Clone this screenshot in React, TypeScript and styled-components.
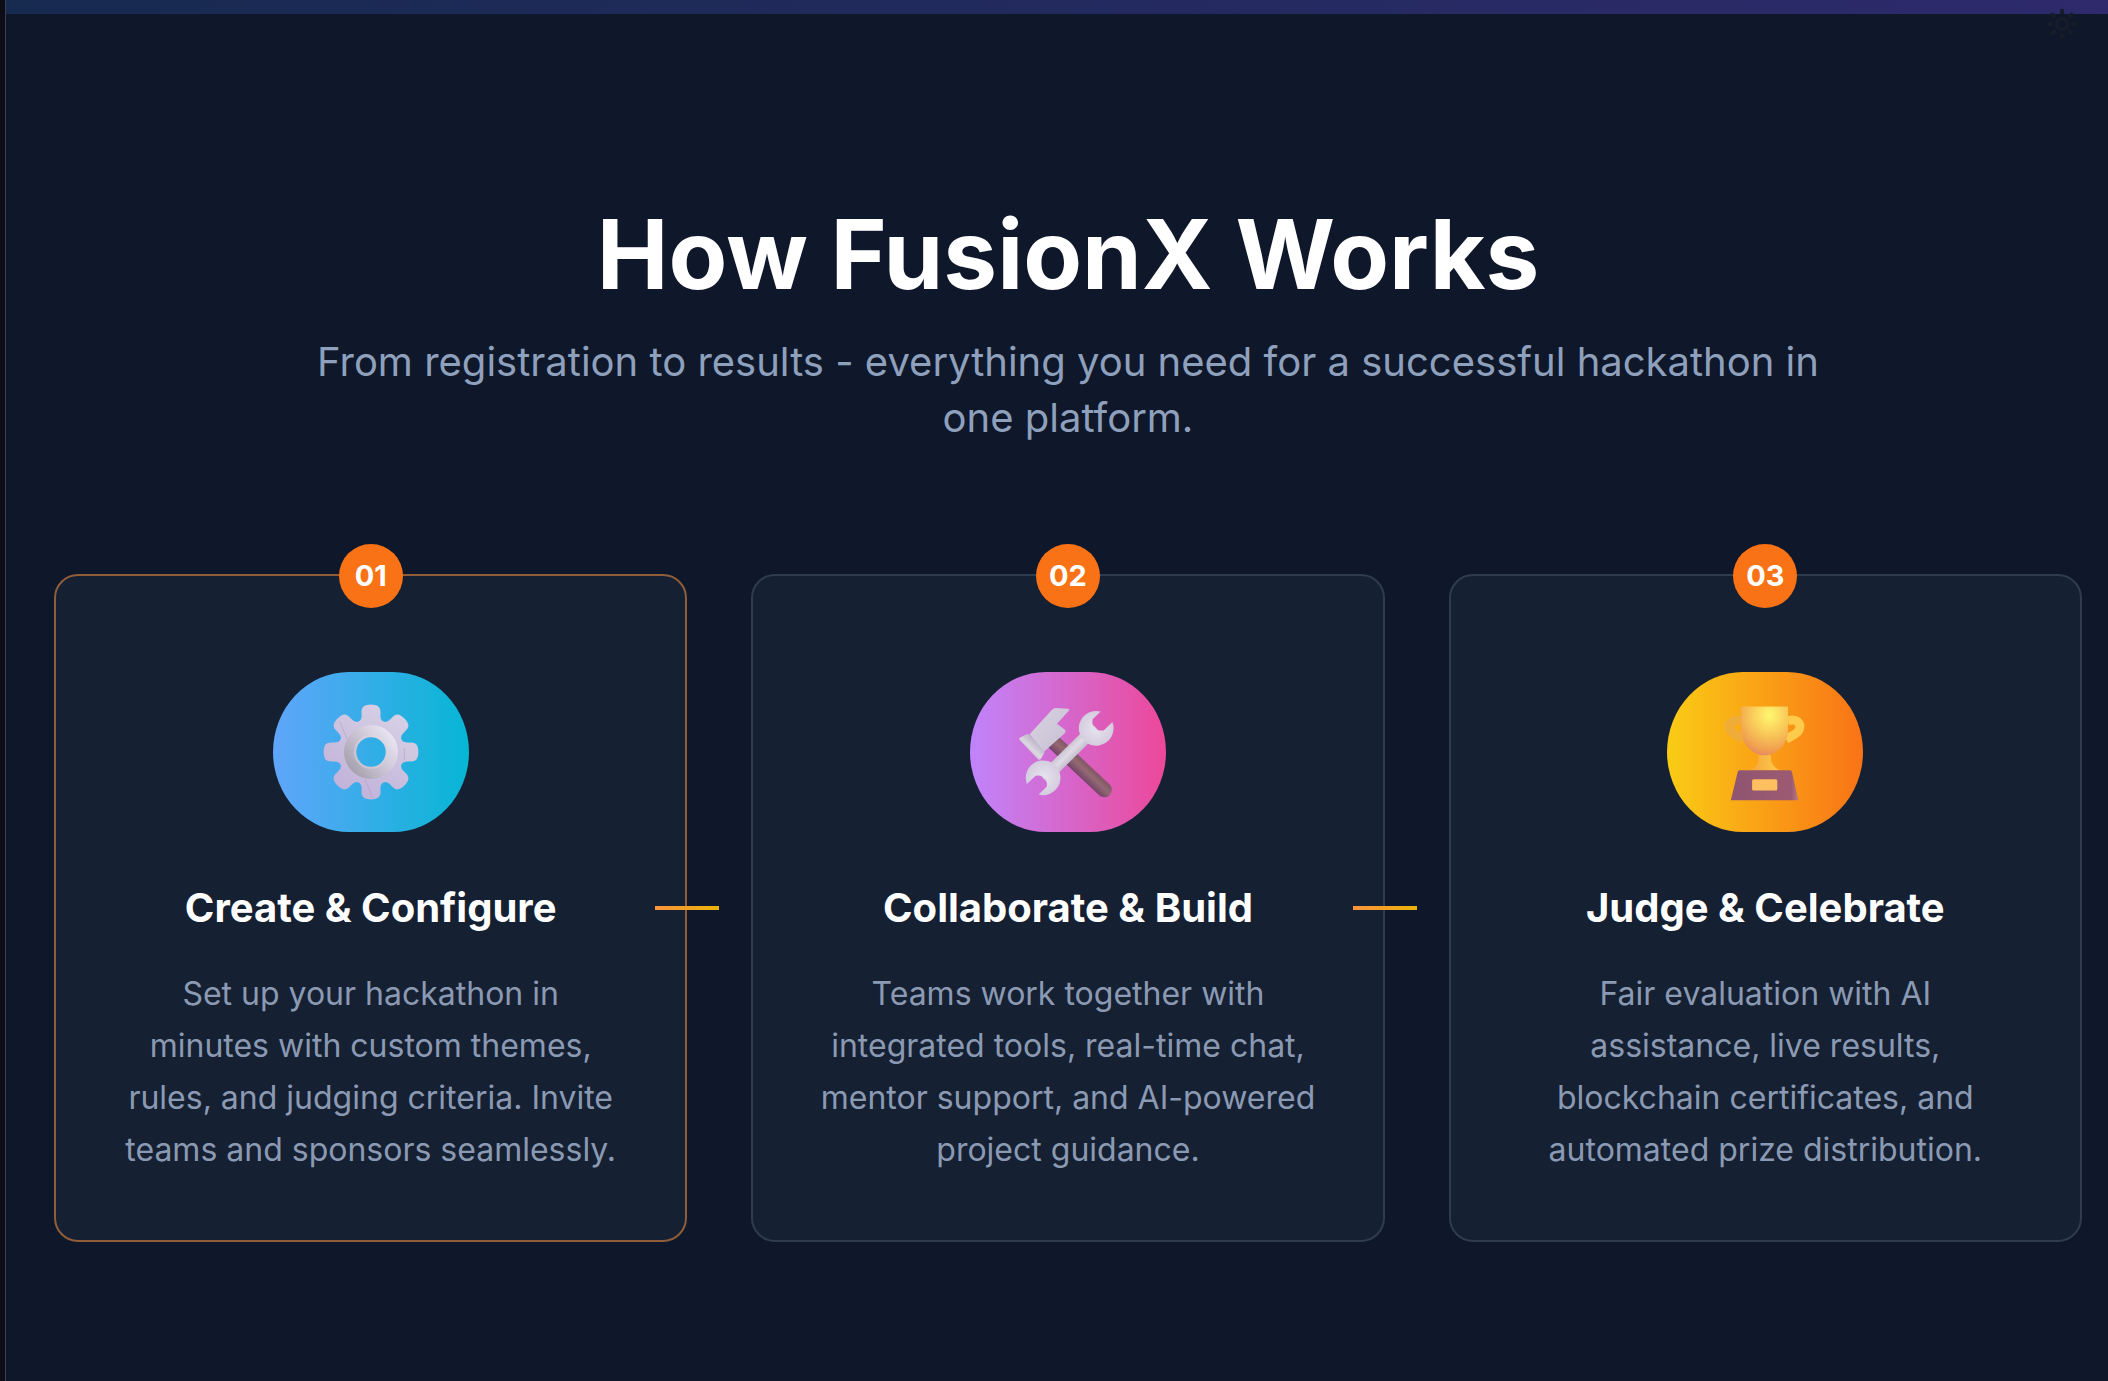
import React from "react";
import styled, { createGlobalStyle } from "styled-components";
import { Sun } from "lucide-react";

const GlobalStyle = createGlobalStyle`
  html, body {
    margin: 0;
    padding: 0;
    background: #0f172a;
  }
  * {
    box-sizing: border-box;
  }
`;

// polar point around the gear centre, 0deg pointing up
const pt = (deg: number, r: number) => {
  const a = (deg * Math.PI) / 180;
  return `${(16 + r * Math.sin(a)).toFixed(2)} ${(16 - r * Math.cos(a)).toFixed(2)}`;
};

const gearPath = () => {
  let d = `M${pt(-22.5, 11)}`;
  for (let i = 0; i < 8; i++) {
    const t = i * 45;
    d += ` Q${pt(t - 16, 11)} ${pt(t - 14, 13)}`;
    d += ` C${pt(t - 12.5, 15.8)} ${pt(t - 7, 15.8)} ${pt(t, 15.8)}`;
    d += ` C${pt(t + 7, 15.8)} ${pt(t + 12.5, 15.8)} ${pt(t + 14, 13)}`;
    d += ` Q${pt(t + 16, 11)} ${pt(t + 22.5, 11)}`;
  }
  return d + " Z";
};

function GearIcon() {
  return (
    <EmojiSvg viewBox="0 0 32 32">
      <defs>
        <linearGradient id="gearBody" x1="0.8" y1="0" x2="0.2" y2="1">
          <stop offset="0" stopColor="#d8d2e6" />
          <stop offset="1" stopColor="#bfb0d8" />
        </linearGradient>
        <linearGradient id="gearRing" x1="0.85" y1="0.15" x2="0.1" y2="0.75">
          <stop offset="0" stopColor="#e8e4f0" />
          <stop offset="0.55" stopColor="#c8c1d2" />
          <stop offset="1" stopColor="#a8a3b0" />
        </linearGradient>
        <linearGradient id="gearLip" x1="1" y1="0" x2="0" y2="1">
          <stop offset="0" stopColor="#e0dbe8" />
          <stop offset="1" stopColor="#c4bdcc" />
        </linearGradient>
        <mask id="gearHole">
          <rect width="32" height="32" fill="#fff" />
          <circle cx="16" cy="16" r="4.9" fill="#000" />
        </mask>
      </defs>
      <g mask="url(#gearHole)">
        <path d={gearPath()} fill="url(#gearBody)" />
        <path d="M5.6 5.9 L8.2 12 M27.1 14.7 V18.6 M14 25.2 L16.6 31.2" stroke="#a99cbd" strokeWidth="0.18" fill="none" />
        <circle cx="16" cy="16" r="9" fill="url(#gearRing)" />
        <circle cx="16" cy="16" r="5.7" fill="url(#gearLip)" />
      </g>
    </EmojiSvg>
  );
}

function ToolsIcon() {
  const jaw = "M30.8 6 A5.8 5.8 0 1 1 26.9 2.5 L24.2 5.1 Q23.6 9.4 27.9 8.8 Z";
  return (
    <EmojiSvg viewBox="0 0 32 32">
      <defs>
        <linearGradient id="handle" gradientUnits="userSpaceOnUse" x1="22.6" y1="19.2" x2="18.8" y2="23.2">
          <stop offset="0" stopColor="#7c5064" />
          <stop offset="0.5" stopColor="#946a72" />
          <stop offset="1" stopColor="#74446a" />
        </linearGradient>
        <linearGradient id="hammerHead" x1="0" y1="0" x2="1" y2="1">
          <stop offset="0" stopColor="#d8d3e0" />
          <stop offset="1" stopColor="#c6bfd4" />
        </linearGradient>
        <linearGradient id="hammerCap" gradientUnits="userSpaceOnUse" x1="1.8" y1="16.4" x2="5" y2="13">
          <stop offset="0" stopColor="#b9b4c2" />
          <stop offset="0.55" stopColor="#dcd7e2" />
          <stop offset="1" stopColor="#c2bccc" />
        </linearGradient>
        <linearGradient id="shaft" gradientUnits="userSpaceOnUse" x1="14.9" y1="14.9" x2="17.9" y2="17.9">
          <stop offset="0" stopColor="#cac5d3" />
          <stop offset="0.5" stopColor="#e0dbe6" />
          <stop offset="1" stopColor="#c4becf" />
        </linearGradient>
        <radialGradient id="wrenchHead" cx="0.5" cy="0.5" r="0.6">
          <stop offset="0" stopColor="#e8e4ee" />
          <stop offset="1" stopColor="#cfc8dc" />
        </radialGradient>
      </defs>
      <path d="M11.2 12.7 L28.1 28.6" stroke="url(#handle)" strokeWidth="5" strokeLinecap="round" fill="none" />
      <path d="M3.2 10.1 L10.6 2 Q11.2 1.3 12 1.3 L16 1.6 Q16.7 1.8 16.2 2.3 L12.3 6.6 L15 8.6 Q15.4 9.2 15 9.7 L7.9 16 Z" fill="url(#hammerHead)" />
      <path d="M-0.2 11.9 Q-0.4 11.4 0.2 11.1 L2.2 10.1 Q2.7 9.9 3.1 10.3 L8 15.6 Q8.3 16.1 8 16.6 L6.9 18.3 Q6.5 18.8 6 18.4 Z" fill="url(#hammerCap)" />
      <path d="M25.2 7.8 L7.9 24.9" stroke="url(#shaft)" strokeWidth="4.2" fill="none" />
      <path d={jaw} fill="url(#wrenchHead)" />
      <path d={jaw} fill="url(#wrenchHead)" transform="rotate(180 16.55 16.35)" />
    </EmojiSvg>
  );
}

function TrophyIcon() {
  return (
    <EmojiSvg viewBox="0 0 32 32">
      <defs>
        <radialGradient id="cup" cx="0.6" cy="0.18" r="1">
          <stop offset="0" stopColor="#fff870" />
          <stop offset="0.4" stopColor="#f9c858" />
          <stop offset="0.72" stopColor="#f09e50" />
          <stop offset="1" stopColor="#d66c80" />
        </radialGradient>
        <linearGradient id="stem" x1="0" y1="0" x2="1" y2="0">
          <stop offset="0" stopColor="#f2a63a" />
          <stop offset="1" stopColor="#ffc94d" />
        </linearGradient>
        <linearGradient id="plinth" x1="0" y1="0" x2="1" y2="0">
          <stop offset="0" stopColor="#8f5470" />
          <stop offset="0.9" stopColor="#9d5b72" />
          <stop offset="1" stopColor="#b87c80" />
        </linearGradient>
      </defs>
      <path d="M8.3 5.6 C5.3 4.6 3.6 6.4 4.4 8.6 C4.9 9.9 6.8 10.6 8.8 11.7" stroke="#efac38" strokeWidth="3" fill="none" />
      <path d="M23.5 5.6 C26.5 4.6 28.2 6.4 27.4 8.6 C26.9 9.9 25 10.6 23 11.7" stroke="#ffcb4c" strokeWidth="3" fill="none" />
      <path d="M13.9 16.8 H17.9 C17.9 19.5 18.5 20.8 20.9 22.2 H11.1 C13.5 20.8 13.9 19.5 13.9 16.8 Z" fill="url(#stem)" />
      <path d="M8.1 1.2 Q8.1 0.8 8.5 0.8 H23.3 Q23.7 0.8 23.7 1.2 V8.5 C23.7 13 20.2 17.1 15.9 17.1 C11.6 17.1 8.1 13 8.1 8.5 Z" fill="url(#cup)" />
      <path d="M7.6 22.1 H24.3 Q24.9 22.1 25 22.7 L27.1 32.1 H4.6 L6.9 22.7 Q7 22.1 7.6 22.1 Z" fill="url(#plinth)" />
      <Plaque x="11.7" y="25.1" width="8.4" height="3.7" rx="0.5" />
    </EmojiSvg>
  );
}

const steps = [
  {
    num: "01",
    title: "Create & Configure",
    text: "Set up your hackathon in minutes with custom themes, rules, and judging criteria. Invite teams and sponsors seamlessly.",
    from: "#60a5fa",
    to: "#06b6d4",
    icon: <GearIcon />,
    active: true,
    connector: true,
  },
  {
    num: "02",
    title: "Collaborate & Build",
    text: "Teams work together with integrated tools, real-time chat, mentor support, and AI-powered project guidance.",
    from: "#c084fc",
    to: "#ec4899",
    icon: <ToolsIcon />,
    active: false,
    connector: true,
  },
  {
    num: "03",
    title: "Judge & Celebrate",
    text: "Fair evaluation with AI assistance, live results, blockchain certificates, and automated prize distribution.",
    from: "#facc15",
    to: "#f97316",
    icon: <TrophyIcon />,
    active: false,
    connector: false,
  },
];

export default function App() {
  return (
    <Page>
      <GlobalStyle />
      <Rail />
      <Main>
        <TopBar />
        <ThemeToggle>
          <Sun size={32} strokeWidth={3} />
        </ThemeToggle>
        <Section>
          <Heading>How FusionX Works</Heading>
          <Subtitle>
            From registration to results - everything you need for a successful hackathon in one platform.
          </Subtitle>
          <CardGrid>
            {steps.map((step) => (
              <Card key={step.num} $active={step.active}>
                <Badge>{step.num}</Badge>
                <IconBlob $from={step.from} $to={step.to}>
                  {step.icon}
                </IconBlob>
                <CardTitle>{step.title}</CardTitle>
                <CardText>{step.text}</CardText>
                {step.connector && <Connector />}
              </Card>
            ))}
          </CardGrid>
        </Section>
      </Main>
    </Page>
  );
}

const Page = styled.div`
  display: flex;
  width: 2108px;
  height: 1381px;
  overflow: hidden;
  background: #0f172a;
  font-family: Inter, "Liberation Sans", sans-serif;
`;

const Rail = styled.div`
  flex: 0 0 6px;
  background: #0c0d16;
  border-right: 1px solid #3b3f4a;
`;

const Main = styled.main`
  position: relative;
  flex: 1;
  display: flex;
  flex-direction: column;
`;

const TopBar = styled.div`
  flex: 0 0 14px;
  background: linear-gradient(90deg, #172a50, #2e2a6c);
`;

const ThemeToggle = styled.div`
  position: absolute;
  top: 8px;
  right: 30px;
  display: flex;
  color: #151d2b;
`;

const Section = styled.section`
  display: flex;
  flex-direction: column;
  align-items: center;
  padding: 187px 26px 0 48px;
`;

const Heading = styled.h2`
  margin: 0;
  font-size: 96px;
  line-height: 106px;
  font-weight: 700;
  color: #ffffff;
  white-space: nowrap;
`;

const Subtitle = styled.p`
  margin: 27px 0 0;
  width: 1536px;
  font-size: 40px;
  line-height: 56px;
  text-align: center;
  color: #8ea0bb;
`;

const CardGrid = styled.div`
  align-self: stretch;
  display: grid;
  grid-template-columns: repeat(3, 1fr);
  gap: 64px;
  margin-top: 128px;
`;

const Card = styled.article<{ $active: boolean }>`
  position: relative;
  display: flex;
  flex-direction: column;
  align-items: center;
  height: 668px;
  padding: 96px 64px 0;
  border-radius: 24px;
  background: #152032;
  border: 2px solid ${(p) => (p.$active ? "#8f5d39" : "#2f3c50")};
`;

const Badge = styled.div`
  position: absolute;
  top: -32px;
  left: 50%;
  transform: translateX(-50%);
  width: 64px;
  height: 64px;
  padding-bottom: 2px;
  border-radius: 50%;
  display: flex;
  align-items: center;
  justify-content: center;
  background: #f97316;
  color: #ffffff;
  font-size: 29px;
  font-weight: 700;
`;

const IconBlob = styled.div<{ $from: string; $to: string }>`
  width: 196px;
  height: 160px;
  flex: none;
  display: flex;
  align-items: center;
  justify-content: center;
  border-radius: 76px / 80px;
  background: linear-gradient(90deg, ${(p) => p.$from}, ${(p) => p.$to});
`;

const EmojiSvg = styled.svg`
  width: 96px;
  height: 96px;
  overflow: visible;
`;

const Plaque = styled.rect`
  fill: #fdbf5f;
`;

const CardTitle = styled.h3`
  margin: 48px 0 0;
  font-size: 40px;
  line-height: 56px;
  font-weight: 700;
  color: #ffffff;
  text-align: center;
  white-space: nowrap;
`;

const CardText = styled.p`
  margin: 32px 0 0;
  font-size: 32px;
  line-height: 52px;
  color: #8b9ab2;
  text-align: center;
`;

const Connector = styled.div`
  position: absolute;
  top: calc(50% - 2px);
  right: -34px;
  width: 64px;
  height: 4px;
  background: linear-gradient(90deg, #fb923c, #eab308);
`;
